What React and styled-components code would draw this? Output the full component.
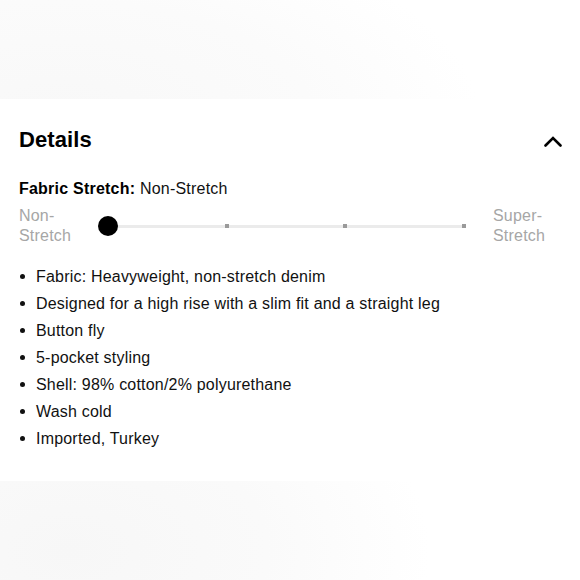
import styled, { createGlobalStyle } from "styled-components";

const GlobalStyle = createGlobalStyle`
  html, body {
    margin: 0;
    padding: 0;
    background: #ffffff;
  }
  body {
    font-family: "Liberation Sans", Arial, sans-serif;
    color: #111111;
  }
`;

const Page = styled.div`
  width: 580px;
  height: 580px;
  display: flex;
  flex-direction: column;
  overflow: hidden;
`;

const Band = styled.div`
  height: ${(p) => p.$height}px;
  flex-shrink: 0;
  background: ${(p) =>
    p.$bottom
      ? "radial-gradient(ellipse 360px 220px at 70px 70px, #f7f7f7 0%, #fafafa 55%, #ffffff 100%)"
      : "radial-gradient(ellipse 420px 200px at 60px 120px, #f8f8f8 0%, #fbfbfb 60%, #ffffff 100%)"};
`;

const Panel = styled.section`
  flex: 1;
  background: #ffffff;
  padding: 27px 16px 0 19px;
  display: flex;
  flex-direction: column;
`;

const Header = styled.div`
  display: flex;
  align-items: center;
  justify-content: space-between;
  height: 28px;
`;

const Title = styled.h2`
  margin: 0;
  font-size: 22px;
  line-height: 28px;
  font-weight: 700;
  letter-spacing: 0.1px;
  color: #000;
`;

const Toggle = styled.button`
  border: 0;
  background: none;
  padding: 0;
  width: 20px;
  height: 20px;
  display: flex;
  align-items: center;
  justify-content: center;
  margin-top: 3px;
  margin-right: 1px;
`;

const StretchLine = styled.p`
  margin: 25px 0 0;
  font-size: 16px;
  line-height: 20px;
  letter-spacing: 0.22px;

  & strong {
    font-weight: 700;
    color: #000;
  }
`;

const SliderRow = styled.div`
  display: flex;
  align-items: center;
  margin-top: 7px;
`;

const ScaleLabel = styled.div`
  width: ${(p) => p.$width}px;
  font-size: 16px;
  line-height: 20px;
  letter-spacing: 0.2px;
  color: #a6a6a6;
  flex-shrink: 0;
`;

const TrackWrap = styled.div`
  width: 376px;
  padding: 0 10px;
  box-sizing: border-box;
  flex-shrink: 0;
  margin-right: 19px;
`;

const Track = styled.div`
  height: 20px;
  display: flex;
  justify-content: space-between;
  align-items: center;
  background: linear-gradient(#ebebeb, #ebebeb) center / 100% 3px no-repeat;
`;

const Stop = styled.div`
  width: 0;
  display: flex;
  justify-content: center;
  align-items: center;
`;

const Thumb = styled.span`
  flex-shrink: 0;
  width: 20px;
  height: 20px;
  border-radius: 50%;
  background: #000;
`;

const Tick = styled.span`
  flex-shrink: 0;
  width: 4px;
  height: 4px;
  background: #9a9a9a;
`;

const List = styled.ul`
  list-style: none;
  margin: 17px 0 0;
  padding: 0;
`;

const Item = styled.li`
  display: flex;
  align-items: center;
  font-size: 16px;
  line-height: 27px;
  letter-spacing: 0.2px;
  color: #111;
`;

const Dot = styled.span`
  width: 17px;
  flex-shrink: 0;
  display: flex;

  &::before {
    content: "";
    width: 5px;
    height: 5px;
    margin-left: 1px;
    border-radius: 50%;
    background: #111;
  }
`;

const details = [
  "Fabric: Heavyweight, non-stretch denim",
  "Designed for a high rise with a slim fit and a straight leg",
  "Button fly",
  "5-pocket styling",
  "Shell: 98% cotton/2% polyurethane",
  "Wash cold",
  "Imported, Turkey",
];

const stops = [0, 1, 2, 3];

export default function App() {
  const level = 0;
  return (
    <Page>
      <GlobalStyle />
      <Band $height={99} />
      <Panel>
        <Header>
          <Title>Details</Title>
          <Toggle aria-label="Collapse details">
            <svg width="18" height="11" viewBox="0 0 18 11" fill="none">
              <polyline
                points="1.5,9.5 9,2 16.5,9.5"
                stroke="#000"
                strokeWidth="2.6"
                strokeLinecap="round"
                strokeLinejoin="miter"
              />
            </svg>
          </Toggle>
        </Header>

        <StretchLine>
          <strong>Fabric Stretch:</strong> Non-Stretch
        </StretchLine>

        <SliderRow>
          <ScaleLabel $width={79}>
            Non-
            <br />
            Stretch
          </ScaleLabel>
          <TrackWrap>
            <Track>
              {stops.map((s) => (
                <Stop key={s}>{s === level ? <Thumb /> : <Tick />}</Stop>
              ))}
            </Track>
          </TrackWrap>
          <ScaleLabel $width={70}>
            Super-
            <br />
            Stretch
          </ScaleLabel>
        </SliderRow>

        <List>
          {details.map((d) => (
            <Item key={d}>
              <Dot />
              {d}
            </Item>
          ))}
        </List>
      </Panel>
      <Band $height={99} $bottom />
    </Page>
  );
}
